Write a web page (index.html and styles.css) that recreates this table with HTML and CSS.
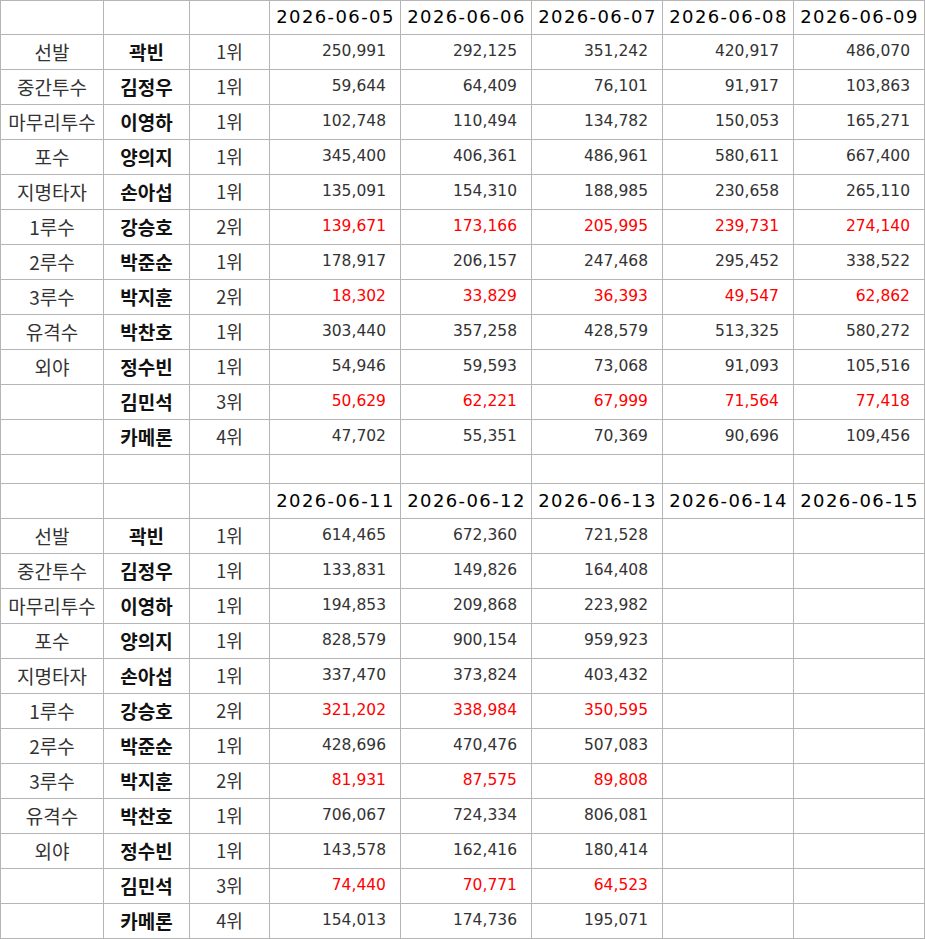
FILE: index.html
```html
<!DOCTYPE html>
<html lang="ko">
<head>
<meta charset="utf-8">
<title>Table</title>
<link rel="stylesheet" href="styles.css">
</head>
<body>
<div class="sheet">
  <div></div><div></div><div></div><div class="h">2026-06-05</div><div class="h">2026-06-06</div><div class="h">2026-06-07</div><div class="h">2026-06-08</div><div class="h">2026-06-09</div>

  <div class="pos">선발</div><div class="name">곽빈</div><div class="rank">1위</div><div class="n">250,991</div><div class="n">292,125</div><div class="n">351,242</div><div class="n">420,917</div><div class="n">486,070</div>
  <div class="pos">중간투수</div><div class="name">김정우</div><div class="rank">1위</div><div class="n">59,644</div><div class="n">64,409</div><div class="n">76,101</div><div class="n">91,917</div><div class="n">103,863</div>
  <div class="pos">마무리투수</div><div class="name">이영하</div><div class="rank">1위</div><div class="n">102,748</div><div class="n">110,494</div><div class="n">134,782</div><div class="n">150,053</div><div class="n">165,271</div>
  <div class="pos">포수</div><div class="name">양의지</div><div class="rank">1위</div><div class="n">345,400</div><div class="n">406,361</div><div class="n">486,961</div><div class="n">580,611</div><div class="n">667,400</div>
  <div class="pos">지명타자</div><div class="name">손아섭</div><div class="rank">1위</div><div class="n">135,091</div><div class="n">154,310</div><div class="n">188,985</div><div class="n">230,658</div><div class="n">265,110</div>
  <div class="pos">1루수</div><div class="name">강승호</div><div class="rank">2위</div><div class="n red">139,671</div><div class="n red">173,166</div><div class="n red">205,995</div><div class="n red">239,731</div><div class="n red">274,140</div>
  <div class="pos">2루수</div><div class="name">박준순</div><div class="rank">1위</div><div class="n">178,917</div><div class="n">206,157</div><div class="n">247,468</div><div class="n">295,452</div><div class="n">338,522</div>
  <div class="pos">3루수</div><div class="name">박지훈</div><div class="rank">2위</div><div class="n red">18,302</div><div class="n red">33,829</div><div class="n red">36,393</div><div class="n red">49,547</div><div class="n red">62,862</div>
  <div class="pos">유격수</div><div class="name">박찬호</div><div class="rank">1위</div><div class="n">303,440</div><div class="n">357,258</div><div class="n">428,579</div><div class="n">513,325</div><div class="n">580,272</div>
  <div class="pos">외야</div><div class="name">정수빈</div><div class="rank">1위</div><div class="n">54,946</div><div class="n">59,593</div><div class="n">73,068</div><div class="n">91,093</div><div class="n">105,516</div>
  <div class="pos"></div><div class="name">김민석</div><div class="rank">3위</div><div class="n red">50,629</div><div class="n red">62,221</div><div class="n red">67,999</div><div class="n red">71,564</div><div class="n red">77,418</div>
  <div class="pos"></div><div class="name">카메론</div><div class="rank">4위</div><div class="n">47,702</div><div class="n">55,351</div><div class="n">70,369</div><div class="n">90,696</div><div class="n">109,456</div>

  <div></div><div></div><div></div><div></div><div></div><div></div><div></div><div></div>

  <div></div><div></div><div></div><div class="h">2026-06-11</div><div class="h">2026-06-12</div><div class="h">2026-06-13</div><div class="h">2026-06-14</div><div class="h">2026-06-15</div>

  <div class="pos">선발</div><div class="name">곽빈</div><div class="rank">1위</div><div class="n">614,465</div><div class="n">672,360</div><div class="n">721,528</div><div class="n"></div><div class="n"></div>
  <div class="pos">중간투수</div><div class="name">김정우</div><div class="rank">1위</div><div class="n">133,831</div><div class="n">149,826</div><div class="n">164,408</div><div class="n"></div><div class="n"></div>
  <div class="pos">마무리투수</div><div class="name">이영하</div><div class="rank">1위</div><div class="n">194,853</div><div class="n">209,868</div><div class="n">223,982</div><div class="n"></div><div class="n"></div>
  <div class="pos">포수</div><div class="name">양의지</div><div class="rank">1위</div><div class="n">828,579</div><div class="n">900,154</div><div class="n">959,923</div><div class="n"></div><div class="n"></div>
  <div class="pos">지명타자</div><div class="name">손아섭</div><div class="rank">1위</div><div class="n">337,470</div><div class="n">373,824</div><div class="n">403,432</div><div class="n"></div><div class="n"></div>
  <div class="pos">1루수</div><div class="name">강승호</div><div class="rank">2위</div><div class="n red">321,202</div><div class="n red">338,984</div><div class="n red">350,595</div><div class="n"></div><div class="n"></div>
  <div class="pos">2루수</div><div class="name">박준순</div><div class="rank">1위</div><div class="n">428,696</div><div class="n">470,476</div><div class="n">507,083</div><div class="n"></div><div class="n"></div>
  <div class="pos">3루수</div><div class="name">박지훈</div><div class="rank">2위</div><div class="n red">81,931</div><div class="n red">87,575</div><div class="n red">89,808</div><div class="n"></div><div class="n"></div>
  <div class="pos">유격수</div><div class="name">박찬호</div><div class="rank">1위</div><div class="n">706,067</div><div class="n">724,334</div><div class="n">806,081</div><div class="n"></div><div class="n"></div>
  <div class="pos">외야</div><div class="name">정수빈</div><div class="rank">1위</div><div class="n">143,578</div><div class="n">162,416</div><div class="n">180,414</div><div class="n"></div><div class="n"></div>
  <div class="pos"></div><div class="name">김민석</div><div class="rank">3위</div><div class="n red">74,440</div><div class="n red">70,771</div><div class="n red">64,523</div><div class="n"></div><div class="n"></div>
  <div class="pos"></div><div class="name">카메론</div><div class="rank">4위</div><div class="n">154,013</div><div class="n">174,736</div><div class="n">195,071</div><div class="n"></div><div class="n"></div>
</div>
</body>
</html>
```

FILE: styles.css
```css
html, body {
  margin: 0;
  padding: 0;
  background: #fff;
}

body {
  font-family: "Noto Sans CJK KR", "Noto Sans", sans-serif;
  font-size: 19px;
  color: #222;
}

.sheet {
  display: grid;
  width: 925px;
  box-sizing: border-box;
  padding: 1px;
  gap: 1px;
  background: #b5b5b5;
  grid-template-columns: 102px 85px 79px 130px 130px 130px 130px 130px;
  grid-template-rows: 33px repeat(12, 34px) 28px 34px repeat(12, 34px);
}

.sheet > div {
  background: #fff;
  display: flex;
  align-items: center;
  justify-content: center;
  white-space: nowrap;
  overflow: hidden;
  line-height: 1;
}

.sheet > .h {
  font-family: "DejaVu Sans", "Noto Sans CJK KR", sans-serif;
  font-size: 18px;
  letter-spacing: 1.4px;
  color: #000;
  padding-left: 1px;
  padding-bottom: 1px;
}

.sheet > .pos {
  font-size: 19px;
  color: #333;
  padding-bottom: 2px;
}

.sheet > .name {
  font-size: 19px;
  font-weight: 700;
  color: #111;
  padding-bottom: 2px;
}

.sheet > .rank {
  font-size: 18px;
  color: #333;
  padding-bottom: 2px;
}

.sheet > .n {
  font-family: "DejaVu Sans", "Noto Sans CJK KR", sans-serif;
  font-size: 15.5px;
  justify-content: flex-end;
  padding-right: 14px;
  color: #333;
}

.sheet > .red {
  color: #ff0000;
}
```
